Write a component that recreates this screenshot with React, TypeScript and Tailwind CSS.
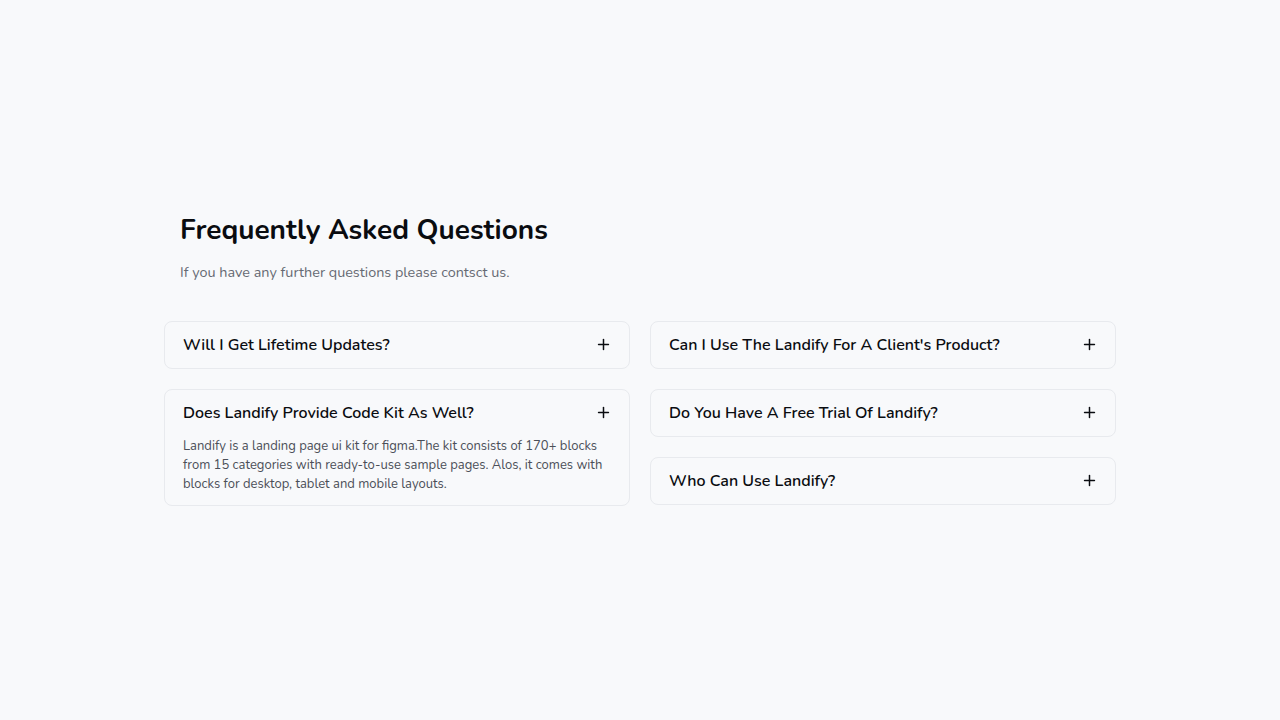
import { Plus } from 'lucide-react';

interface Faq {
  q: string;
  a?: string;
}

const LEFT: Faq[] = [
  { q: 'Will I Get Lifetime Updates?' },
  {
    q: 'Does Landify Provide Code Kit As Well?',
    a: 'Landify is a landing page ui kit for figma.The kit consists of 170+ blocks from 15 categories with ready-to-use sample pages. Alos, it comes with blocks for desktop, tablet and mobile layouts.',
  },
];

const RIGHT: Faq[] = [
  { q: "Can I Use The Landify For A Client's Product?" },
  { q: 'Do You Have A Free Trial Of Landify?' },
  { q: 'Who Can Use Landify?' },
];

function FaqCard({ item }: { item: Faq }) {
  return (
    <div className="rounded-lg border border-[#e8eaee] bg-[#f8f9fb] pl-[18px] pr-[16px]">
      <div className="flex h-[46px] items-center justify-between">
        <span className="text-[16px] font-semibold text-[#0a0c10]">{item.q}</span>
        <Plus size={17} strokeWidth={2.1} className="mr-[1px] text-[#0a0c10]" />
      </div>
      {item.a && (
        <p className="mt-[1px] pb-[11px] text-[13px] leading-[19px] text-[#4b4f58]">{item.a}</p>
      )}
    </div>
  );
}

export default function App() {
  return (
    <div className="min-h-[720px] bg-[#f8f9fb] font-['Nunito','Lato',sans-serif]">
      <div className="mx-auto w-[952px] pt-[210px]">
        <div className="px-4">
          <h1 className="text-[28px] font-bold leading-[40px] text-[#0a0c10]">Frequently Asked Questions</h1>
          <p className="mt-[12px] text-[14.4px] text-[#666a73]">If you have any further questions please contsct us.</p>
        </div>
        <div className="mt-[37px] grid grid-cols-2 items-start gap-5">
          <div className="flex flex-col gap-5">
            {LEFT.map((f) => (
              <FaqCard key={f.q} item={f} />
            ))}
          </div>
          <div className="flex flex-col gap-5">
            {RIGHT.map((f) => (
              <FaqCard key={f.q} item={f} />
            ))}
          </div>
        </div>
      </div>
    </div>
  );
}
